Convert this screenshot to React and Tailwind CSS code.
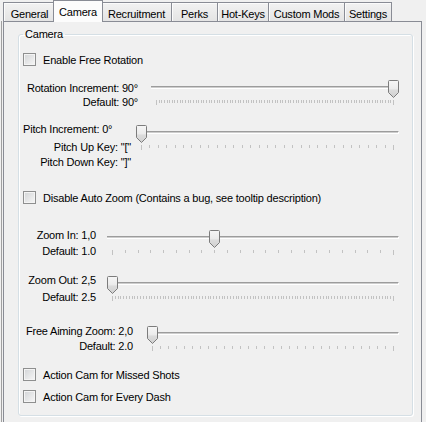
import { useId } from "react";

const tabs = [
  { label: "General", w: "w-[52px]" },
  { label: "Camera", w: "w-[50px]", active: true },
  { label: "Recruitment", w: "w-[70px]" },
  { label: "Perks", w: "w-[46px]" },
  { label: "Hot-Keys", w: "w-[51px]" },
  { label: "Custom Mods", w: "w-[76px]" },
  { label: "Settings", w: "w-[48px]", last: true },
];

function CheckBox({ label }) {
  return (
    <div className="flex items-center h-[13px] pl-[4px]">
      <div className="w-[13px] h-[13px] border border-[#8e8f8f] bg-[linear-gradient(135deg,#d2d4d6,#f7f7f7)] shadow-[inset_0_0_0_1px_#f4f4f4]" />
      <span className="ml-[7px] whitespace-nowrap">{label}</span>
    </div>
  );
}

function Thumb({ left }) {
  const id = useId();
  return (
    <svg
      width="11"
      height="18"
      viewBox="0 0 11 18"
      className="absolute top-0"
      style={{ left }}
    >
      <defs>
        <linearGradient id={id} x1="0" y1="0" x2="0" y2="1">
          <stop offset="0" stopColor="#f6f6f6" />
          <stop offset="0.5" stopColor="#ebebeb" />
          <stop offset="0.55" stopColor="#dcdcdc" />
          <stop offset="1" stopColor="#d0d0d0" />
        </linearGradient>
      </defs>
      <path
        d="M1.5 0.5 H9.5 Q10.5 0.5 10.5 1.5 V12.5 L5.5 17.5 L0.5 12.5 V1.5 Q0.5 0.5 1.5 0.5 Z"
        fill={`url(#${id})`}
        stroke="#7c7c7c"
      />
    </svg>
  );
}

function Slider({ width, steps, value }) {
  const span = width - 11;
  const ticks = [];
  for (let i = 0; i <= steps; i++) {
    const x = Math.round(5 + (i * span) / steps);
    const end = i === 0 || i === steps;
    ticks.push(
      <rect key={i} x={x} y="0" width="1" height={end ? 5 : 3} fill="#c2c2c2" />
    );
  }
  return (
    <div className="relative h-[25px] pt-[6px] shrink-0" style={{ width }}>
      <div className="h-[3px] border-t border-[#9c9c9c] bg-[#cdcdcd] border-b border-b-white border-r border-r-white" />
      <svg width={width} height="5" className="block mt-[11px]" shapeRendering="crispEdges">
        {ticks}
      </svg>
      <Thumb left={Math.round((value / steps) * span)} />
    </div>
  );
}

export default function App() {
  return (
    <div className="w-[426px] h-[422px] overflow-hidden bg-[#f0f0f0] font-['Liberation_Sans',Arial,sans-serif] text-[11px] leading-[14px] text-black tracking-[-0.2px]">
      <div className="h-[21px] flex items-end pl-[3px]">
        {tabs.map((t) =>
          t.active ? (
            <div
              key={t.label}
              className={`${t.w} h-[22px] -mx-[2px] -mb-[1px] relative z-10 flex justify-center pt-[4px] border border-b-0 border-[#898c95] bg-[#fcfcfc]`}
            >
              {t.label}
            </div>
          ) : (
            <div
              key={t.label}
              className={`${t.w} h-[19px] flex justify-center pt-[4px] border-l border-t border-[#898c95] bg-[linear-gradient(#f2f2f2,#e4e4e4)] shadow-[inset_1px_1px_0_#fbfbfb] ${t.last ? "border-r" : ""}`}
            >
              {t.label}
            </div>
          )
        )}
      </div>

      <div className="ml-[1px] border-l border-[#a0a0a0] pl-[1px]">
        <div className="w-[419px] h-[402px] border border-[#898c95] pt-[5px] pl-[14px]">
          <fieldset className="w-[395px] border border-[#d5dfe5] rounded-[3px] pb-[12px] shadow-[1px_1px_0_#fff,inset_1px_1px_0_#fff]">
            <legend className="ml-[4px] px-[2px]">Camera</legend>

            <div className="mt-[12px]">
              <CheckBox label="Enable Free Rotation" />
            </div>

            <div className="mt-[14px] flex items-start">
              <div className="w-[119px] text-right pt-[1px]">
                <div>Rotation Increment: 90°</div>
                <div>Default: 90°</div>
              </div>
              <div className="ml-[13px]">
                <Slider width={248} steps={90} value={90} />
              </div>
            </div>

            <div className="mt-[13px] flex items-start">
              <div className="w-[112px] text-right">
                <div className="text-left pl-[4px] whitespace-nowrap">Pitch Increment: 0°</div>
                <div className="mt-[4px]">Pitch Up Key: "["</div>
                <div className="mt-[1px]">Pitch Down Key: "]"</div>
              </div>
              <div className="ml-[5px] mt-[3px]">
                <Slider width={263} steps={30} value={0} />
              </div>
            </div>

            <div className="mt-[22px]">
              <CheckBox label="Disable Auto Zoom (Contains a bug, see tooltip description)" />
            </div>

            <div className="mt-[24px] flex items-start">
              <div className="w-[77px] text-right">
                <div>Zoom In: 1,0</div>
                <div className="mt-[2px]">Default: 1.0</div>
              </div>
              <div className="ml-[11px] mt-[2px]">
                <Slider width={292} steps={22} value={8} />
              </div>
            </div>

            <div className="mt-[15px] flex items-start">
              <div className="w-[77px] text-right">
                <div>Zoom Out: 2,5</div>
                <div className="mt-[3px]">Default: 2.5</div>
              </div>
              <div className="ml-[11px] mt-[3px]">
                <Slider width={292} steps={100} value={0} />
              </div>
            </div>

            <div className="mt-[20px] flex items-start">
              <div className="w-[114px] text-right">
                <div>Free Aiming Zoom: 2,0</div>
                <div className="mt-[1px]">Default: 2.0</div>
              </div>
              <div className="ml-[14px] mt-[2px]">
                <Slider width={252} steps={30} value={0} />
              </div>
            </div>

            <div className="mt-[15px]">
              <CheckBox label="Action Cam for Missed Shots" />
            </div>
            <div className="mt-[9px]">
              <CheckBox label="Action Cam for Every Dash" />
            </div>
          </fieldset>
        </div>
      </div>
    </div>
  );
}
